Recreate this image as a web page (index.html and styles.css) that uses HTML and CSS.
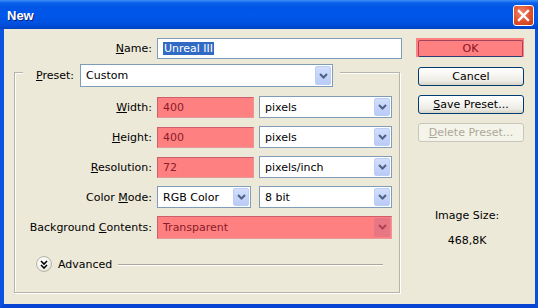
FILE: index.html
```html
<!DOCTYPE html>
<html>
<head>
<meta charset="utf-8">
<link rel="stylesheet" href="styles.css">
</head>
<body>
<div class="window">
  <div class="titlebar">
    <span class="title">New</span>
    <span class="close">
      <svg width="13" height="13" viewBox="0 0 13 13"><path d="M2 2 L11 11 M11 2 L2 11" stroke="#fff" stroke-width="2.4" stroke-linecap="square"/></svg>
    </span>
  </div>
  <div class="client">
    <div class="main">
      <div class="name-row">
        <span class="lbl"><u>N</u>ame:</span>
        <div class="field name-field"><span class="selected">Unreal III</span></div>
      </div>
      <div class="group">
        <div class="legend">
          <span class="lbl preset-lbl"><u>P</u>reset:</span>
          <div class="combo preset-combo"><span class="val">Custom</span><span class="arrow"><svg width="9" height="6" viewBox="0 0 9 6"><path d="M1 1 L4.5 4.5 L8 1" fill="none" stroke="#4d6185" stroke-width="2"/></svg></span></div>
        </div>
        <div class="rows">
          <span class="lbl"><u>W</u>idth:</span>
          <div class="field red">400</div>
          <div class="combo"><span class="val">pixels</span><span class="arrow"><svg width="9" height="6" viewBox="0 0 9 6"><path d="M1 1 L4.5 4.5 L8 1" fill="none" stroke="#4d6185" stroke-width="2"/></svg></span></div>

          <span class="lbl"><u>H</u>eight:</span>
          <div class="field red">400</div>
          <div class="combo"><span class="val">pixels</span><span class="arrow"><svg width="9" height="6" viewBox="0 0 9 6"><path d="M1 1 L4.5 4.5 L8 1" fill="none" stroke="#4d6185" stroke-width="2"/></svg></span></div>

          <span class="lbl"><u>R</u>esolution:</span>
          <div class="field red">72</div>
          <div class="combo"><span class="val">pixels/inch</span><span class="arrow"><svg width="9" height="6" viewBox="0 0 9 6"><path d="M1 1 L4.5 4.5 L8 1" fill="none" stroke="#4d6185" stroke-width="2"/></svg></span></div>

          <span class="lbl">Color <u>M</u>ode:</span>
          <div class="combo mode-combo"><span class="val">RGB Color</span><span class="arrow"><svg width="9" height="6" viewBox="0 0 9 6"><path d="M1 1 L4.5 4.5 L8 1" fill="none" stroke="#4d6185" stroke-width="2"/></svg></span></div>
          <div class="combo"><span class="val">8 bit</span><span class="arrow"><svg width="9" height="6" viewBox="0 0 9 6"><path d="M1 1 L4.5 4.5 L8 1" fill="none" stroke="#4d6185" stroke-width="2"/></svg></span></div>

          <span class="lbl">Background <u>C</u>ontents:</span>
          <div class="combo red span2"><span class="val">Transparent</span><span class="arrow"><svg width="9" height="6" viewBox="0 0 9 6"><path d="M1 1 L4.5 4.5 L8 1" fill="none" stroke="#b04058" stroke-width="2"/></svg></span></div>
        </div>
        <div class="advanced">
          <span class="adv-icon"><svg width="8" height="9" viewBox="0 0 8 9"><path d="M1 1 L4 4 L7 1 M1 5 L4 8 L7 5" fill="none" stroke="#000" stroke-width="1.6"/></svg></span>
          <span class="adv-text">Advanced</span>
          <span class="adv-line"></span>
        </div>
      </div>
    </div>
    <div class="side">
      <div class="btn ok"><span class="ok-inner">OK</span></div>
      <div class="btn cancel">Cancel</div>
      <div class="btn save"><u>S</u>ave Preset...</div>
      <div class="btn disabled"><u>D</u>elete Preset...</div>
      <div class="imgsize">
        <div class="is-title">Image Size:</div>
        <div class="is-val">468,8K</div>
      </div>
    </div>
  </div>
</div>
</body>
</html>
```
FILE: styles.css
```css
html, body {
  margin: 0;
  padding: 0;
  background: #ece9d8;
}
.window {
  width: 538px;
  height: 308px;
  display: flex;
  flex-direction: column;
  font-family: "DejaVu Sans", Tahoma, sans-serif;
  font-size: 11px;
  color: #000;
}
.titlebar {
  height: 29px;
  flex: none;
  display: flex;
  align-items: center;
  justify-content: space-between;
  padding: 0 4px 0 7px;
  box-sizing: border-box;
  background: linear-gradient(#3d8ff7 0px, #0a5fe9 3px, #0055e5 7px, #0057ea 14px, #0053e3 22px, #0049d2 27px, #0040c0 29px);
}
.title {
  font-family: "Liberation Sans", Arial, sans-serif;
  font-weight: bold;
  font-size: 13px;
  color: #fff;
  text-shadow: 1px 1px 0 #0a1e7a;
  margin-top: 1px;
}
.close {
  width: 21px;
  height: 21px;
  box-sizing: border-box;
  border: 1px solid #fff;
  border-radius: 3px;
  background: radial-gradient(circle at 40% 35%, #ec8a6c 0%, #e0502d 55%, #c73a16 100%);
  display: flex;
  align-items: center;
  justify-content: center;
  margin-top: 1px;
}
.client {
  flex: 1;
  display: flex;
  background: #ece9d8;
  border-left: 4px solid #0a52e0;
  border-right: 3px solid #0a4fdc;
  border-bottom: 4px solid #0844d4;
}
.main {
  width: 388px;
  margin-left: 10px;
  padding-top: 9px;
}
.name-row {
  display: flex;
  align-items: center;
  gap: 5px;
}
.name-row .lbl {
  width: 138px;
  text-align: right;
}
.lbl u, .btn u {
  text-decoration: underline;
}
.field {
  height: 21px;
  box-sizing: border-box;
  border: 1px solid #7f9db9;
  background: #fff;
  display: flex;
  align-items: center;
  padding-left: 5px;
}
.name-field {
  width: 245px;
  padding-left: 5px;
}
.selected {
  background: #316ac5;
  color: #fff;
  padding: 0 1px;
  line-height: 13px;
}
.field.red {
  background: #ff8080;
  border-color: #cc5e6e #e89898 #e89898 #cc5e6e;
  color: #8a1c2a;
  padding-left: 5px;
}
.group {
  margin-top: 13px;
  width: 386px;
  height: 221px;
  box-sizing: border-box;
  border: 1px solid #b6b4a6;
  box-shadow: inset 1px 1px 0 #fff, 1px 1px 0 #fff;
}
.legend {
  display: flex;
  align-items: center;
  gap: 5px;
  width: fit-content;
  margin: -9px 0 0 8px;
  padding: 0 7px 0 13px;
  background: #ece9d8;
}
.preset-lbl {
  width: 39px;
}
.combo {
  height: 22px;
  box-sizing: border-box;
  border: 1px solid #7f9db9;
  background: #fff;
  display: flex;
  align-items: center;
  justify-content: space-between;
  padding: 1px 1px 1px 5px;
}
.preset-combo {
  width: 253px;
  height: 23px;
}
.arrow {
  width: 16px;
  height: 100%;
  box-sizing: border-box;
  border: 1px solid #bccdf6;
  border-radius: 2px;
  background: linear-gradient(#d2defc, #b9cbf7);
  display: flex;
  align-items: center;
  justify-content: center;
}
.rows {
  margin-top: 9px;
  display: grid;
  grid-template-columns: 137px 97px 133px;
  grid-auto-rows: 22px;
  column-gap: 5px;
  row-gap: 8px;
  align-items: center;
}
.rows .lbl {
  text-align: right;
}
.rows .field {
  height: 21px;
}
.mode-combo {
  width: 94px;
}
.combo.red {
  background: #ff8080;
  border-color: #cc5e6e #e89898 #e89898 #cc5e6e;
  color: #8a1c2a;
  height: 23px;
}
.combo.red .arrow {
  background: #e87784;
  border-color: #e87784;
}
.span2 {
  grid-column: 2 / 4;
}
.advanced {
  margin-top: 18px;
  display: flex;
  align-items: center;
  padding: 0 16px 0 21px;
  height: 16px;
}
.adv-icon {
  width: 16px;
  height: 16px;
  box-sizing: border-box;
  border-radius: 50%;
  border: 1px solid #b8b6a8;
  background: radial-gradient(circle at 40% 35%, #ffffff 0%, #f2f1ea 55%, #d6d3c6 100%);
  display: flex;
  align-items: center;
  justify-content: center;
}
.adv-text {
  margin-left: 6px;
}
.adv-line {
  flex: 1;
  height: 1px;
  margin-left: 6px;
  background: #aca899;
  box-shadow: 0 1px 0 #fff;
}
.side {
  width: 106px;
  margin-left: 16px;
  padding-top: 9px;
  display: flex;
  flex-direction: column;
}
.btn {
  height: 19px;
  box-sizing: border-box;
  border: 1px solid #003c74;
  border-radius: 3px;
  background: linear-gradient(#ffffff 0%, #f7f6f2 40%, #ecebe5 75%, #d8d3c6 100%);
  display: flex;
  align-items: center;
  justify-content: center;
}
.btn.ok {
  margin-left: -2px;
  width: 108px;
  height: 19px;
  border: none;
  border-radius: 0;
  background: #ff8080;
  padding: 2px 1px 0 2px;
}
.ok-inner {
  flex: 1;
  height: 100%;
  box-sizing: border-box;
  border: 1px solid #a24460;
  border-bottom-color: #2a3f74;
  border-radius: 2px;
  display: flex;
  align-items: center;
  justify-content: center;
  color: #8a1020;
}
.cancel {
  margin-top: 10px;
}
.save {
  margin-top: 9px;
}
.disabled {
  margin-top: 9px;
  border-color: #c9c7ba;
  background: #f5f4ea;
  color: #aca899;
}
.imgsize {
  margin-top: 67px;
  padding-right: 8px;
  text-align: center;
  line-height: 14px;
}
.is-val {
  margin-top: 11px;
}
```
